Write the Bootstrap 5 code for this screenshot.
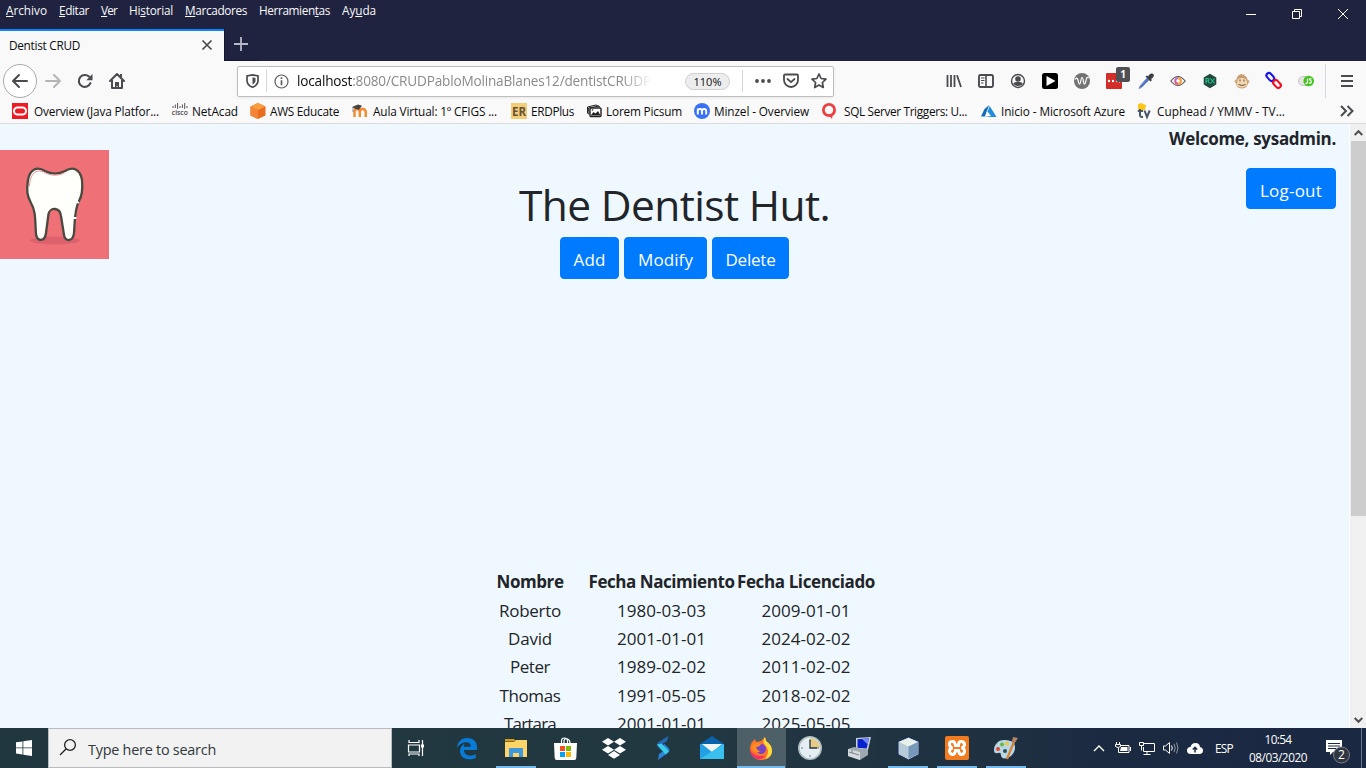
<!DOCTYPE html>
<html lang="es">
<head>
<meta charset="utf-8">
<title>Dentist CRUD</title>
<link href="https://cdn.jsdelivr.net/npm/bootstrap@5.3.0/dist/css/bootstrap.min.css" rel="stylesheet">
<style>
html,body{height:768px;overflow:hidden}
body{font-family:"Open Sans","Noto Sans",sans-serif;font-size:11.8px;line-height:16px;color:#0c0c0d;background:#f9f9fa}
svg{display:block;flex:none;overflow:visible}
.titlebar{height:61px;background:#202340;color:#f9f9fa}
.menus{height:20px;padding-left:6px}
.menus span{display:block}
.tabrow{height:32px}
.tab-on{width:224px;background:#f9f9fa;border-top:2px solid #0a84ff;color:#0c0c0d;padding:0 10px 2px 9px}
.tab-new{width:34px;border-bottom:1px solid #14162c;border-left:1px solid #14162c;padding:0 2px 2px 0}
.winbtns{width:138px;height:28px}
.cell46{width:46px}.cell32{width:32px}.cell24{width:24px}.cell49{width:49px}
.toolbar{height:40px}
.back-btn{width:34px;height:34px;border:1px solid #aaa;border-radius:50%;background:#fff;margin-left:3px}
.urlbox{width:597px;height:31px;margin-left:104px;border:1px solid #bebebe;border-radius:2px;background:#fff;box-shadow:0 1px 3px #0001}
.vline{width:1px;background:#d7d7db;flex:none}
.url{font-size:13.6px;line-height:20px;width:356px;margin:0 32px 0 8px;color:#8a8a8d;-webkit-mask-image:linear-gradient(90deg,#000 325px,transparent 355px)}
.url b{font-weight:400;color:#0c0c0d}
.zoompill{width:45px;height:17px;border-radius:9px;background:#ededee;border:1px solid #cfcfd2;font-size:11px;line-height:15px}
.bookmarks{height:23px;display:grid;grid-template-columns:160px 78px 102px 159px 75px 108px 127px 160px 156px 200px 1fr;padding:0 0 2px 12px;border-bottom:1px solid #dcdcde}
.bookmarks>div{display:flex;align-items:center;white-space:nowrap}
.bookmarks svg{margin-right:5px}
.page{height:604px;background:#f0f8ff;color:#212529;font-size:17px;line-height:26px}
.page .btn{--bs-btn-bg:#007bff;--bs-btn-border-color:#007bff;font-size:17px;line-height:26px;border-radius:4px;padding:9px 0 5px;font-weight:400;height:42px}
.side{width:180px}
.site-name{font-size:42.5px;line-height:50px;font-weight:400;margin:56px 0 7px}
.crud{gap:5px}
.people{width:403px;margin-top:289px;table-layout:fixed;border-collapse:collapse}
.people tr{height:28.4px}.people th,.people td{padding:0;text-align:center;white-space:nowrap}
.scroller{width:17px;background:#f0f0f0;border-left:1px solid #fff}
.thumb{height:375px;background:#cdcdcd;width:15px}
.taskbar{height:40px;background:linear-gradient(90deg,#203740 0,#213841 50%,#1f3141 72%,#1b2941 82%,#1b2842 100%);color:#fff}
.searchbox{width:344px;height:40px;background:#f2f2f2;border:1px solid #b9bdbf;color:#30383c;font-size:14.4px}
.app{width:49px;height:40px;border-right:1px solid transparent;background-clip:padding-box}
.app.running{background:linear-gradient(#76b9ed,#76b9ed) 4px 38px/40px 2px no-repeat}
.app.active{background-color:#4d5f67;background-position:0 38px;background-size:48px 2px}
.clock{width:68px;font-size:11.8px;line-height:18px}
</style>
</head>
<body class="d-flex flex-column">
<header class="titlebar d-flex flex-column justify-content-between">
 <div class="d-flex justify-content-between" style="height:29px">
  <nav class="menus d-flex align-items-center">
   <span style="width:53px"><i class="fst-normal" data-w="41"><u>A</u>rchivo</i></span><span style="width:42px"><i class="fst-normal" data-w="30"><u>E</u>ditar</i></span><span style="width:28px"><i class="fst-normal" data-w="16"><u>V</u>er</i></span><span style="width:56px"><i class="fst-normal" data-w="44">Hi<u>s</u>torial</i></span><span style="width:74px"><i class="fst-normal" data-w="62"><u>M</u>arcadores</i></span><span style="width:83px"><i class="fst-normal" data-w="71">Herramien<u>t</u>as</i></span><span><i class="fst-normal" data-w="34">Ay<u>u</u>da</i></span>
  </nav>
  <div class="winbtns d-flex align-items-center">
   <div class="cell46 d-flex justify-content-center"><svg width="10" height="10"><path d="M0 5.500h10" stroke="#fff"/></svg></div>
   <div class="cell46 d-flex justify-content-center"><svg width="10" height="10" fill="none" stroke="#fff"><path d="M.5 2.500h7v7h-7zM2.500 2.500v-2h7v7h-2"/></svg></div>
   <div class="cell46 d-flex justify-content-center"><svg width="10" height="10"><path d="M0 0l10 10M10 0L0 10" stroke="#fff"/></svg></div>
  </div>
 </div>
 <div class="tabrow d-flex">
  <div class="tab-on d-flex align-items-center justify-content-between"><span data-w="71">Dentist CRUD</span><svg width="14" height="14"><path d="M2.500 2.500l9 9m0-9l-9 9" stroke="#4a4a4f" stroke-width="1.700"/></svg></div>
  <div class="tab-new d-flex align-items-center justify-content-center"><svg width="14" height="14"><path d="M7 0v14M0 7h14" stroke="#b7b9c7" stroke-width="1.800"/></svg></div>
 </div>
</header>
<div class="toolbar d-flex align-items-center">
 <div class="back-btn d-flex align-items-center justify-content-center"><svg width="16" height="16" fill="none" stroke="#4a4a4f" stroke-width="2" stroke-linecap="round" stroke-linejoin="round"><path d="M15 8H1M7 2L1 8l6 6"/></svg></div>
 <div class="cell32 d-flex justify-content-center"><svg width="16" height="16" fill="none" stroke="#b5b5b7" stroke-width="2" stroke-linecap="round" stroke-linejoin="round"><path d="M1 8h14M9 2l6 6-6 6"/></svg></div>
 <div class="cell32 d-flex justify-content-center"><svg width="16" height="16"><path d="M13.400 10.200A6 6 0 1 1 12 3.600" fill="none" stroke="#4a4a4f" stroke-width="2.100" stroke-linecap="round"/><path d="M15.500 1v6.200H9.300z" fill="#4a4a4f"/></svg></div>
 <div class="cell32 d-flex justify-content-center"><svg width="16" height="16"><path d="M1 8l7-7 7 7M3 7v8h10V7" fill="none" stroke="#4a4a4f" stroke-width="2" stroke-linejoin="round" stroke-linecap="round"/><path d="M6 15V9h4v6h-1.400v-2H7.500v2z" fill="#4a4a4f"/><path d="M11 1h2v4l-2-2z" fill="#4a4a4f"/></svg></div>
 <div class="urlbox d-flex align-items-center">
  <svg class="ms-2" width="13" height="14"><path d="M6.500.8L12 2v4.500c0 3.300-2.300 5.500-5.500 6.800C3.300 12 1 9.800 1 6.500V2z" fill="none" stroke="#4a4a4f" stroke-width="1.700"/><path d="M6.500 3.300l3 .7v2.600c0 1.800-1.100 3-3 4z" fill="#4a4a4f"/></svg>
  <div class="vline" style="height:22px;margin:0 7px 0 7px"></div>
  <svg width="15" height="15" fill="none" stroke="#5c5c60"><circle cx="7.500" cy="7.500" r="6.500" stroke-width="1.200"/><path d="M7.500 3.200v1.700M7.500 6.300v5" stroke-width="1.700"/></svg>
  <div class="url text-nowrap flex-shrink-0"><span data-w="354"><b>localhost</b>:8080/CRUDPabloMolinaBlanes12/dentistCRUDP</span></div>
  <div class="zoompill text-center flex-shrink-0">110%</div>
  <div class="vline" style="height:22px;margin:0 12px"></div>
  <svg width="16" height="16" fill="#4a4a4f"><circle cx="2" cy="8" r="1.900"/><circle cx="8" cy="8" r="1.900"/><circle cx="14" cy="8" r="1.900"/></svg>
  <svg style="margin-left:12px" width="16" height="16" fill="none" stroke="#4a4a4f" stroke-width="1.800" stroke-linecap="round" stroke-linejoin="round"><path d="M2 1.500h12a1 1 0 0 1 1 1V7A7 7 0 0 1 1 7V2.500a1 1 0 0 1 1-1zM4.500 6L8 9.200 11.500 6"/></svg>
  <svg style="margin-left:12px" width="16" height="16"><path d="M8 1l2.100 4.500 4.900.6-3.600 3.400.9 5L8 12l-4.300 2.500.9-5L1 6.100l4.900-.6z" fill="none" stroke="#4a4a4f" stroke-width="1.700" stroke-linejoin="round"/></svg>
 </div>
 <div class="d-flex align-items-center ms-auto h-100" style="width:428px">
  <div class="cell32 d-flex justify-content-center"><svg width="16" height="16"><path d="M1.500 2v12M5 2v12M8.500 2v12M11 2.300L15 14" fill="none" stroke="#4a4a4f" stroke-width="1.800"/></svg></div>
  <div class="cell32 d-flex justify-content-center"><svg width="16" height="16" fill="none" stroke="#4a4a4f"><rect x="1" y="2" width="14" height="12" rx="1.500" stroke-width="1.900"/><path d="M8 2v12" stroke-width="1.600"/><path d="M3 5h3.500M3 7.500h3.500M3 10h2.500"/></svg></div>
  <div class="cell32 d-flex justify-content-center"><svg width="16" height="16"><circle cx="8" cy="8" r="6.500" fill="none" stroke="#4a4a4f" stroke-width="1.400"/><circle cx="8" cy="6" r="2.800" fill="#4a4a4f"/><path d="M3.200 10.200C5 8.700 11 8.700 12.800 10.200 11.500 13.900 4.500 13.900 3.200 10.200z" fill="#4a4a4f"/></svg></div>
  <div class="cell32 d-flex justify-content-center"><svg width="16" height="16"><rect width="16" height="16" rx="2.500"/><path d="M4.500 3l9 5-9 5z" fill="#fff"/></svg></div>
  <div class="cell32 d-flex justify-content-center"><svg width="16" height="16"><circle cx="8" cy="8" r="8" fill="#737373"/><path d="M1 6.500C3 3.500 3.800 6 4.500 9c.6 3 1.500 3 2.100 0C7.200 5.500 7.400 4.500 8 4.500s1 1 1.500 4.500c.5 3 1.500 3 2.100 0 .7-3 1.200-6 3-4" fill="none" stroke="#fff" stroke-width="1.200"/></svg></div>
  <div class="cell32 d-flex justify-content-center position-relative"><svg width="16" height="16"><rect width="16" height="16" rx="1" fill="#d32d27"/><g fill="#fff"><circle cx="3" cy="8" r="1.200"/><circle cx="7" cy="8" r="1.200"/><circle cx="11" cy="8" r="1.200"/><rect x="13" y="6.500" width="1" height="3"/></g></svg><span class="position-absolute text-white text-center fw-bold" style="left:18px;top:-6px;width:14px;height:15px;background:#505054;font-size:10px;line-height:15px;border-radius:2px">1</span></div>
  <div class="cell32 d-flex justify-content-center"><svg width="16" height="16"><path d="M9 5l2 2-7.500 7.500-2.500 1 1-2.500z" fill="#4776d8" stroke="#8494ae"/><path d="M7.500 3.500l1.500-1 1 1C11.500 1 13 0 15 1s.5 3.500-2 5l1 1-1.500 1.500z" fill="#393d42"/></svg></div>
  <div class="cell32 d-flex justify-content-center"><svg width="16" height="16"><path d="M.8 8Q8-1 15.200 8 8 17 .8 8z" fill="#fff" stroke="#555" stroke-width="1.200"/><circle cx="8" cy="8" r="3.700" fill="#e84b75"/><path d="M8 4.300a3.700 3.700 0 0 1 0 7.400z" fill="#f3a536"/><path d="M4.300 8A3.700 3.700 0 0 1 8 4.300V8z" fill="#b07bd0"/><circle cx="8" cy="8" r="1.700" fill="#fff"/></svg></div>
  <div class="cell32 d-flex justify-content-center"><svg width="16" height="16"><path d="M8 .8l6.300 3.600v7.200L8 15.200l-6.300-3.600V4.400z" fill="#224b40"/><path d="M4 10.500v-5h2q2 1.300 0 2.500H4m2 0l1.500 2.500M8.500 5.500l4 5m0-5l-4 5" fill="none" stroke="#28be8b" stroke-width="1.100"/></svg></div>
  <div class="cell32 d-flex justify-content-center"><svg width="16" height="16"><circle cx="2.500" cy="8.500" r="2" fill="#d8b18a"/><circle cx="13.500" cy="8.500" r="2" fill="#d8b18a"/><path d="M2.500 8C2.500 3 5 1.500 8.500.5l-.5 1.500 3-.8-1 1.300C13 3.500 13.500 5 13.500 8 15 12.500 12 15.500 8 15.500S1 12.500 2.500 8z" fill="#c99b70"/><path d="M4 6q4-2 8 0 2 5 .5 7-4.500 3-9 0Q2 11 4 6z" fill="#f2d6b1"/><path d="M6 6.500v2M10 6.500v2M4.500 11.500q3.500 2 7 0" stroke="#6b5341" fill="none"/></svg></div>
  <div class="cell32 d-flex justify-content-center"><svg width="16" height="16" fill="none" stroke-width="2.100"><rect x="-1" y="3" width="9" height="5" rx="2.500" transform="translate(1 -1) rotate(48 4 5)" stroke="#1a16ee"/><rect x="6.500" y="8.500" width="9" height="5" rx="2.500" transform="rotate(48 11 11)" stroke="#f00c21"/></svg></div>
  <div class="cell32 d-flex justify-content-center"><svg width="16" height="16"><rect x=".5" y="3.500" width="14" height="9" rx="4.500" fill="#e4e4e4" stroke="#c5c5c5"/><circle cx="10.700" cy="8" r="5.300" fill="#43c51b"/><path d="M9.500 5.500v4q-.6 1.500-2 .5M13.500 5.800q-2.500-.5-2 1 2.500 1 1.500 3-1 .8-2 0" fill="none" stroke="#fff" stroke-width="1.200"/></svg></div>
  <div class="vline" style="height:34px;margin:0 15px 0 3px"></div>
  <svg width="13" height="12"><path d="M0 1h12M0 6h12M0 11h12" stroke="#4a4a4f" stroke-width="2"/></svg>
 </div>
</div>
<div class="bookmarks">
 <div><svg style="margin-right:6px" width="16" height="16"><path fill="#ee1b24" d="M0 0h16v16H0z"/><rect x="2" y="4.500" width="12" height="7" rx="3.500" fill="none" stroke="#fff" stroke-width="2"/></svg><span data-w="125">Overview (Java Platfor...</span></div>
 <div><svg style="margin-right:4px" width="16" height="16"><path d="M1 3v2M3.300 1.500V5M5.600 0v6M8 3v2M10.400 1.500V5M12.700 0v6M15 3v2" stroke="#555"/><text x="-.2" y="12" font-size="7.500" font-weight="600" fill="#444" textLength="16" lengthAdjust="spacingAndGlyphs">cisco</text></svg><span data-w="46">NetAcad</span></div>
 <div><svg style="margin-right:4px" width="16" height="16"><path d="M8 0l7.500 3.500v9L8 16 .5 12.500v-9z" fill="#e96d1f"/><path d="M8 0l7.500 3.500L8 7 .5 3.500z" fill="#f99d3e"/><path d="M.5 3.500L8 7v9L.5 12.500z" fill="#f58536"/></svg><span data-w="69">AWS Educate</span></div>
 <div><svg width="16" height="16"><path d="M2.500 14V9q0-3 2.500-3t2.800 3v5M7.800 14V9q0-3 2.800-3t3.200 3v5" fill="none" stroke="#f38a2d" stroke-width="2.400"/><path d="M0 4l6-2.500 4 1.200-3 4-4-1z" fill="#494440"/><path d="M1 4v5" stroke="#777" stroke-width=".8"/></svg><span data-w="124">Aula Virtual: 1º CFIGS ...</span></div>
 <div><svg style="margin-right:4px" width="16" height="16"><path fill="#f4ce77" d="M0 0h16v16H0z"/><text x="1" y="12.500" font-size="12" font-weight="700" fill="#65513a" textLength="14" lengthAdjust="spacingAndGlyphs">ER</text></svg><span data-w="43">ERDPlus</span></div>
 <div><svg style="margin-right:4px" width="16" height="16" fill="none" stroke="#222"><path d="M3 11.500L1.500 10V4L10 2l4 2M3 11L2.500 5 13 3"/><rect x="4" y="5" width="11" height="8.500" rx="1" fill="#fff" stroke-width="1.400"/><path d="M5 12l2.500-3 2 1.500L12 8l2.500 4.500H5z" fill="#222" stroke="none"/><circle cx="6.500" cy="7" r=".8" fill="#222" stroke="none"/></svg><span data-w="76">Lorem Picsum</span></div>
 <div><svg style="margin-right:4px" width="16" height="16"><circle cx="8" cy="8" r="8" fill="#3972f6"/><path d="M3.800 11.500v-6M3.800 8q0-2 2.100-2T8 8v3.500M8 8q0-2 2.100-2t2.100 2v3.500" stroke="#fff" stroke-width="1.900" fill="none"/></svg><span data-w="95">Minzel - Overview</span></div>
 <div><svg style="margin-right:7px" width="16" height="16"><circle cx="8" cy="7" r="5.600" fill="none" stroke="#ef3e42" stroke-width="2.800"/><path d="M7 11l4 5 .8-5z" fill="#ef3e42"/></svg><span data-w="123">SQL Server Triggers: U...</span></div>
 <div><svg style="margin-right:4px" width="16" height="16"><path d="M8.200 2L3.500 6 0 13.500h3.800z" fill="#126ab8"/><path d="M8.700 3l6.800 11H3.200l6.900-1-3.600-4.400z" fill="#208ce0"/></svg><span data-w="124">Inicio - Microsoft Azure</span></div>
 <div><svg style="margin-right:4px" width="16" height="16"><path d="M1 1l4-1 1 1 3 1-1 5-5 1-2-2z" fill="#ffc51b"/><path d="M3 6v6q0 2.500 3 1.700M.8 8H6M7.500 7.500l2.500 6.500 2.700-6.500" fill="none" stroke="#49556b" stroke-width="2"/></svg><span data-w="128">Cuphead / YMMV - TV...</span></div>
 <div><svg class="ms-auto" style="margin-right:12px" width="14" height="12"><path d="M1 1l5 5-5 5M7.500 1l5 5-5 5" fill="none" stroke="#4a4a4f" stroke-width="2"/></svg></div>
</div>
<div class="page d-flex overflow-hidden">
 <main class="d-flex justify-content-between flex-grow-1 overflow-hidden">
  <div class="side" style="padding-top:26px">
   <svg width="109" height="109"><path fill="#f07078" d="M0 0h109v109H0z"/><ellipse cx="55" cy="90.500" rx="25" ry="4" fill="#dd626d"/><path d="M28 30C30 19 37 16 45 21C51 24.500 59 24.500 65 21C73 16 80 19 82 30C83 41 82 46 79 51C74 61 75 72 74 83C73 92 65 92 64 85L61 66C60 57 50 57 48.500 64L46 83C45 92 37 92 36 84C35 71 36 61 31 53C27 46 26.500 41 28 30z" fill="#fffffc" stroke="#4a493f" stroke-width="2.300"/><path d="M29.500 36C30 22 38 18.500 44.500 22.500C51 26 59 26 65 22.500" fill="none" stroke="#ef8d92" stroke-width="1"/><path d="M76.500 51.500l2.500 1.500M72.500 68h4" stroke="#fff" stroke-width="1.800"/></svg>
  </div>
  <div class="d-flex flex-column align-items-center">
   <h1 class="site-name text-nowrap"><span data-w="311">The Dentist Hut.</span></h1>
   <div class="crud d-flex"><button class="btn btn-primary" style="width:59px"><span data-w="32">Add</span></button><button class="btn btn-primary" style="width:83px"><span data-w="55">Modify</span></button><button class="btn btn-primary" style="width:77px"><span data-w="50">Delete</span></button></div>
   <table class="people"><colgroup><col style="width:114px"><col style="width:149px"><col style="width:140px"></colgroup>
    <thead><tr><th><span data-w="67">Nombre</span></th><th><span data-w="146">Fecha Nacimiento</span></th><th><span data-w="138">Fecha Licenciado</span></th></tr></thead>
    <tbody><tr><td><span data-w="62">Roberto</span></td><td><span data-w="89">1980-03-03</span></td><td><span data-w="89">2009-01-01</span></td></tr>
    <tr><td><span data-w="44">David</span></td><td><span data-w="89">2001-01-01</span></td><td><span data-w="89">2024-02-02</span></td></tr>
    <tr><td><span data-w="40">Peter</span></td><td><span data-w="89">1989-02-02</span></td><td><span data-w="89">2011-02-02</span></td></tr>
    <tr><td><span data-w="61">Thomas</span></td><td><span data-w="89">1991-05-05</span></td><td><span data-w="89">2018-02-02</span></td></tr>
    <tr><td><span data-w="52">Tartara</span></td><td><span data-w="89">2001-01-01</span></td><td><span data-w="89">2025-05-05</span></td></tr></tbody>
   </table>
  </div>
  <div class="side d-flex flex-column align-items-end text-nowrap" style="padding:2px 13px 0 0"><strong><span data-w="167">Welcome, sysadmin.</span></strong><button class="btn btn-primary" style="width:90px;margin-top:16px;height:41px"><span data-w="62">Log-out</span></button></div>
 </main>
 <div class="scroller d-flex flex-column align-items-center"><div class="d-flex align-items-center" style="height:17px"><svg width="9" height="6"><path d="M.7 5l3.800-3.800L8.300 5" fill="none" stroke="#505050" stroke-width="2"/></svg></div><div class="thumb"></div><div class="d-flex align-items-center mt-auto" style="height:17px"><svg width="9" height="6"><path d="M.7 1l3.800 3.800L8.300 1" fill="none" stroke="#505050" stroke-width="2"/></svg></div></div>
</div>
<footer class="taskbar d-flex align-items-center">
 <div class="d-flex justify-content-center" style="width:48px"><svg width="16" height="16" fill="#fff"><path d="M0 2.300l6.500-.9v6.100H0zM7.300 1.300L16 0v7.500H7.300zM0 8.300h6.500v6.100L0 13.600zM7.300 8.300H16V16l-8.700-1.300z"/></svg></div>
 <div class="searchbox d-flex align-items-center"><svg style="margin:0 12px 3px 11px" width="16" height="16" fill="none" stroke="#222" stroke-width="1.300"><circle cx="10" cy="6" r="5.400"/><path d="M6.200 9.800L0 16"/></svg><span class="pt-1" style="line-height:18px" data-w="128">Type here to search</span></div>
 <div class="d-flex justify-content-center" style="width:51px;padding-right:3px"><svg width="17" height="16" fill="none" stroke="#fff" stroke-width="1.200"><path d="M1 0v2.500h10V0M.5 5h11v7H.5zM1 16v-2h10v2M14.500 0v16"/><path d="M13 4.500h3v3h-3z" fill="#fff" stroke="none"/></svg></div>
 <div class="app d-flex align-items-center justify-content-center"><svg width="20" height="21"><path d="M0 10C.7 3 5 0 10.500 0c6 0 9.500 4 9.500 9v3H7c0 4 3 5.500 6 5.500 2.500 0 4-.6 5.700-1.600v4C17 20.800 15 21.300 12 21.300c-6 0-9-4.300-9-8.300 0-3.500 2-6 5-7.500C7 6.700 6.900 7.500 6.800 8.700h7c0-3-1.800-4.400-4.500-4.400C5 4.300 2 7 0 10z" fill="#087bd8"/></svg></div>
 <div class="app running d-flex align-items-center justify-content-center"><svg width="22" height="19"><path d="M0 0h9l2 2.500H0z" fill="#d99a16"/><path fill="#fcd468" d="M0 3L9 3l2-2h11v17H0z"/><path d="M4 18V10q0-1 1-1h12q1 0 1 1v8h-4v-4H8v4z" fill="#3c97dc"/></svg></div>
 <div class="app d-flex align-items-center justify-content-center"><svg width="23" height="23"><path d="M7.500 6V4q0-3 3-3t3 3v2M10 6V3.500q1-2.500 3.500-1.500Q16 3 16 6" fill="none" stroke="#fff" stroke-width="1.200"/><path d="M0 6h23l-.7 15q0 2-2 2H2.700q-2 0-2-2z" fill="#fff"/><path fill="#f25022" d="M6 9h5v5H6z"/><path fill="#7fba00" d="M12 9h5v5h-5z"/><path fill="#00a4ef" d="M6 15h5v5H6z"/><path fill="#ffb900" d="M12 15h5v5h-5z"/></svg></div>
 <div class="app d-flex align-items-center justify-content-center"><svg width="24" height="21" fill="#fff"><path d="M6 0l6 3.800-6 3.800L0 3.800zM18 0l6 3.800-6 3.800-6-3.800zM6 8l6 3.800-6 3.800-6-3.800zM18 8l6 3.800-6 3.800-6-3.800zM12 13l6 3.900-6 3.800-6-3.800z"/></svg></div>
 <div class="app d-flex align-items-center justify-content-center"><svg width="14" height="24"><path d="M12.500 0L2 6.500Q0 9 2 11l4 4 3-5-2.500-2L11 5z" fill="#2568b5"/><path d="M2 24l9-6.500q4-2.500 1.500-5.500L8.500 8 5 12l2.500 3L3 18z" fill="#2d84dc"/><path d="M1 8.500L5.500 7.500l7.500 8-3.500 3z" fill="#38cfe8"/></svg></div>
 <div class="app d-flex align-items-center justify-content-center"><svg width="24" height="22"><path d="M0 7l12-8 12 8z" fill="#0862ac"/><path fill="#239fe4" d="M0 7h24v15H0z"/><path d="M2 7h20l-10 8z" fill="#f1f4f5"/><path d="M0 22L24 7v15z" fill="#39c0ef"/></svg></div>
 <div class="app running active d-flex align-items-center justify-content-center"><svg width="22" height="23"><path d="M2 5l3-3 1 3 5-1 4-4 1 4q6 4 6 10c0 6-5 9-11 9S0 18 0 12q0-4 2-7z" fill="#ff7429"/><path d="M15 0l1 4q6 4 6 10c0 4-3 7-7 8 4-5 4-10 0-14-2-2-2-6 0-8z" fill="#ffda3c"/><path d="M0 12c4 8 9 7 15 7q-5 5-10 2-5-3-5-9z" fill="#f92e68"/><circle cx="11" cy="12" r="5" fill="#7445c8"/><path d="M3 7q4-3 8 0-1 3-5 3 1 4 5 4-7 4-9-3z" fill="#ff8b23"/></svg></div>
 <div class="app d-flex align-items-center justify-content-center"><svg width="24" height="24"><circle cx="12" cy="12" r="11.200" fill="#e5eef2" stroke="#aebcc2" stroke-width="1.600"/><path d="M12 12V2a10 10 0 0 1 10 10z" fill="#e6c985"/><path d="M12 3v2M12 19v2M3 12h2M19 12h2" stroke="#708087"/><path d="M12 4v8h7" fill="none" stroke="#26343a" stroke-width="1.300"/></svg></div>
 <div class="app d-flex align-items-center justify-content-center"><svg width="23" height="23"><path d="M8 1l15-1-3 13-12-1z" fill="#c9d0d7"/><path d="M9.500 2.200l11.500-1-2.300 10.200-9.200-.6z" fill="#0720ce"/><path d="M14 2l7-.8-1.500 6z" fill="#7489fa"/><path d="M0 12l6-2 14 3v5l-8 5-12-4z" fill="#9da8b1"/><path d="M0 12l12 3v8L0 19z" fill="#d5dade"/><path d="M1 15l10 3M4 13v3" stroke="#75808a"/></svg></div>
 <div class="app running d-flex align-items-center justify-content-center"><svg width="21" height="23"><path d="M10.500 0L21 4.500v13L10.500 23 0 17.500v-13z" fill="#b8cbd9" stroke="#1c2b5b"/><path d="M10.500 1L20 5l-9.500 4.500L1 5z" fill="#e9f2e8"/><path d="M10.500 9.500L20 5v12l-9.500 5z" fill="#7898ba"/></svg></div>
 <div class="app running d-flex align-items-center justify-content-center"><svg width="24" height="24"><rect width="24" height="24" rx="2" fill="#f27b20"/><path d="M7.500 5.500q-3.500 0-3 3T7.500 12q-3.500 1-3 3.500t3 3q2.500 0 3-4h3q.5 4 3 4t3-3-3-3.500q3-1 3-3.500t-3-3-3 4h-3q-.5-4-3-4z" fill="none" stroke="#fff" stroke-width="3"/></svg></div>
 <div class="app running d-flex align-items-center justify-content-center"><svg width="24" height="24"><path d="M10 4C4 4 0 9 0 14q0 4 4 3 3-1 3 2c0 5 7 4 11 0s4-11 0-13.500Q14 3.500 10 4z" fill="#b8d7e4"/><circle cx="4" cy="13" r="2" fill="#e54536"/><circle cx="8" cy="8.500" r="2" fill="#69b83d"/><circle cx="13" cy="7.500" r="2" fill="#edc93d"/><circle cx="11" cy="15" r="2" fill="#314c59"/><path d="M21 3l-8 20" stroke="#d68438" stroke-width="2.200"/><path d="M18 5l1-4 5 1-4 6z" fill="#b38362"/></svg></div>
 <div class="d-flex align-items-center" style="margin-left:56px">
  <div class="cell24 d-flex justify-content-center"><svg width="12" height="8"><path d="M1 7l5-5 5 5" fill="none" stroke="#fff" stroke-width="1.400"/></svg></div>
  <div class="cell24 d-flex justify-content-center"><svg width="16" height="12" fill="none" stroke="#fff"><path d="M5.500 3.500H14v7H3.500V6M1.500 0v2M4.500 0v2M.5 2.500h5v2q-2.500 2-5 0z"/><path d="M6 5h6.500v4H5z" fill="#fff" stroke="none"/><path d="M15.500 5v4"/></svg></div>
  <div class="cell24 d-flex justify-content-center"><svg width="16" height="13" fill="none" stroke="#fff"><path d="M5 1.500h10.500v8h-11V5M4.500 12.500h7M8 9.500v3M.5.500h4v3h-4zM2.500 3.500v5"/></svg></div>
  <div class="cell24 d-flex justify-content-center"><svg width="16" height="14" fill="none" stroke="#fff"><path d="M.5 5h2L6.500 1.500v11L2.500 9h-2z"/><path d="M8.500 4.500q1.500 2.500 0 5"/><path d="M11 3q2.500 4 0 8M13.500 1.500q3 5.500 0 11" opacity=".5"/></svg></div>
  <div class="cell24 d-flex justify-content-center"><svg width="16" height="11"><path d="M4 11Q0 11 0 7.500 0 4 3.500 4q1-4 5-4 4 0 4.500 4 3 .5 3 3.500T13 11z" fill="#fff"/><path d="M8 9.500V5M5.800 6.500L8 4.300l2.200 2.200" fill="none" stroke="#1b2942" stroke-width="1.500"/></svg></div>
  <span style="margin-left:8px"><span data-w="18">ESP</span></span>
 </div>
 <div class="clock text-center ms-auto" style="margin-right:11px"><div><span data-w="27">10:54</span></div><div><span data-w="58">08/03/2020</span></div></div>
 <div class="position-relative" style="width:34px;margin-right:4px"><svg width="34" height="24"><path d="M3 4h16v12h-9l-3 3v-3H3z" fill="#fff"/><path d="M5 7.500h12M5 10h12M5 12.500h8" stroke="#1b2942"/><circle cx="18.500" cy="19" r="8" fill="#303740" stroke="#79818c"/></svg><span class="position-absolute" style="left:15px;top:11px;font-size:12px">2</span></div>
 <div style="width:1px;height:40px;background:#68758a;margin-right:4px"></div>
</footer>
<script src="https://cdn.jsdelivr.net/npm/bootstrap@5.3.0/dist/js/bootstrap.bundle.min.js"></script>
<script>
// Track each label so that it fills its own measure.
document.querySelectorAll('[data-w]').forEach(function (el) {
  el.style.display = 'inline-block';
  el.style.whiteSpace = 'nowrap';
  var n = el.textContent.length, w = el.getBoundingClientRect().width;
  el.style.letterSpacing = ((+el.dataset.w - w) / n) + 'px';
});
</script>
</body>
</html>
